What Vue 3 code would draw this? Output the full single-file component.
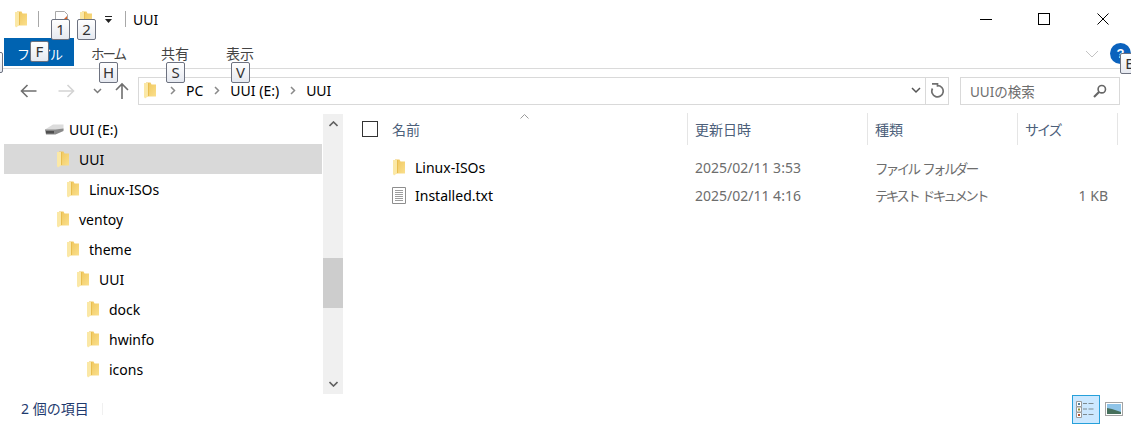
<script setup>
const tree = [
  { name: 'UUI', level: 1, selected: true },
  { name: 'Linux-ISOs', level: 2 },
  { name: 'ventoy', level: 1 },
  { name: 'theme', level: 2 },
  { name: 'UUI', level: 3 },
  { name: 'dock', level: 4 },
  { name: 'hwinfo', level: 4 },
  { name: 'icons', level: 4 },
  { name: 'tile-fonts', level: 2, noIcon: true },
]

const columns = [
  { label: '名前', width: 345, indent: 49 },
  { label: '更新日時', width: 180, indent: 7 },
  { label: '種類', width: 150, indent: 7 },
  { label: 'サイズ', width: 100, indent: 7, kana: true },
]

const files = [
  { name: 'Linux-ISOs', date: '2025/02/11 3:53', type: 'ファイル フォルダー', size: '', folder: true },
  { name: 'Installed.txt', date: '2025/02/11 4:16', type: 'テキスト ドキュメント', size: '1 KB', folder: false },
]

const crumbs = ['PC', 'UUI (E:)', 'UUI']
</script>

<template>
  <div class="win">
    <svg width="0" height="0" class="defs">
      <defs>
        <linearGradient id="fold" x1="0" y1="0" x2="1" y2="1">
          <stop offset="0" stop-color="#efc55a" />
          <stop offset="1" stop-color="#fadf8c" />
        </linearGradient>
        <symbol id="folder" viewBox="0 0 12 17">
          <path d="M2 0.5h4.500l1 2H12v12H2z" fill="url(#fold)" />
          <path d="M0 1h4.500v13L1 16.600 0 15z" fill="#fbe8a6" />
          <path d="M4.500 1v13" stroke="#e9be50" stroke-width="1" />
        </symbol>
      </defs>
    </svg>

    <header class="titlebar">
      <svg class="qa-folder" width="12" height="17"><use href="#folder" /></svg>
      <i class="sep sep-a"></i>
      <svg class="qa-doc" width="15" height="16" viewBox="0 0 15 16">
        <path d="M1.500.5h9l3 3v12h-12z" fill="#fff" stroke="#a8a8a8" />
        <path d="M10 8l3-3v4z" fill="#d9622b" />
      </svg>
      <svg class="qa-folder2" width="12" height="17"><use href="#folder" /></svg>
      <svg class="qa-drop" width="9" height="9" viewBox="0 0 9 9">
        <path d="M1 1.500h7" stroke="#222" />
        <path d="M1 4h7L4.500 8z" fill="#222" />
      </svg>
      <i class="sep sep-b"></i>
      <span class="title">UUI</span>
      <div class="controls">
        <button class="ctl">
          <svg width="12" height="12" viewBox="0 0 12 12"><path d="M0 6.500h12" stroke="#000" /></svg>
        </button>
        <button class="ctl">
          <svg width="12" height="12" viewBox="0 0 12 12"><rect x=".5" y=".5" width="11" height="11" fill="none" stroke="#000" /></svg>
        </button>
        <button class="ctl">
          <svg width="12" height="12" viewBox="0 0 12 12"><path d="M.5.500l11 11M11.500.5l-11 11" stroke="#000" /></svg>
        </button>
      </div>
    </header>

    <nav class="ribbon">
      <span class="tab file">ファイル</span>
      <span class="tab home">ホーム</span>
      <span class="tab share">共有</span>
      <span class="tab view">表示</span>
      <svg class="collapse" width="14" height="8" viewBox="0 0 14 8"><path d="M1 1l6 6 6-6" fill="none" stroke="#c4c4c4" /></svg>
      <svg class="help" width="21" height="21" viewBox="0 0 21 21">
        <circle cx="10.500" cy="10.500" r="10.500" fill="#0b62bd" />
        <text x="10.500" y="15" text-anchor="middle" fill="#fff" font-size="13" font-weight="700" font-family="Liberation Sans, sans-serif">?</text>
      </svg>
    </nav>

    <div class="addr-row">
      <svg class="nav-btn back" width="17" height="14" viewBox="0 0 17 14"><path d="M1.500 7h15M7.500 1l-6 6 6 6" fill="none" stroke="#6f6f6f" stroke-width="1.600" /></svg>
      <svg class="nav-btn fwd" width="17" height="14" viewBox="0 0 17 14"><path d="M15.500 7H.5M9.500 1l6 6-6 6" fill="none" stroke="#d4d4d4" stroke-width="1.600" /></svg>
      <svg class="nav-btn hist" width="9" height="6" viewBox="0 0 9 6"><path d="M1 1l3.500 3.500L8 1" fill="none" stroke="#7a7a7a" stroke-width="1.500" /></svg>
      <svg class="nav-btn up" width="14" height="17" viewBox="0 0 14 17"><path d="M7 17V2M1 8l6-6 6 6" fill="none" stroke="#6f6f6f" stroke-width="1.600" /></svg>
      <div class="addr">
        <svg class="addr-folder" width="12" height="17"><use href="#folder" /></svg>
        <template v-for="c in crumbs" :key="c">
          <svg class="crumb-sep" width="6" height="9" viewBox="0 0 6 9"><path d="M1 1l3.500 3.500L1 8" fill="none" stroke="#8a8a8a" stroke-width="1.500" /></svg>
          <span class="crumb">{{ c }}</span>
        </template>
        <svg class="addr-drop" width="10" height="7" viewBox="0 0 10 7"><path d="M1 1l4 4 4-4" fill="none" stroke="#555" stroke-width="1.500" /></svg>
        <span class="refresh">
          <svg width="15" height="15" viewBox="0 0 15 15"><path d="M7.500 2.500a5.700 5.700 0 1 1-5 3M2 .8h5.500v3" fill="none" stroke="#707070" stroke-width="1.700" /></svg>
        </span>
      </div>
      <div class="search">
        <span>UUIの検索</span>
        <svg width="14" height="14" viewBox="0 0 14 14"><circle cx="8.800" cy="5.200" r="3.700" fill="none" stroke="#666" stroke-width="1.600" /><path d="M6 8L1 13" stroke="#666" stroke-width="2.200" /></svg>
      </div>
    </div>

    <main class="body">
      <aside class="tree">
        <ul class="tree-list">
          <li class="node drive">
            <svg width="19" height="11" viewBox="0 0 19 11">
              <path d="M0 5.500L8 .5h10.500V6L10 9.500H1z" fill="#dcdcdc" />
              <path d="M0 5.500h10.500l8-1V7l-8 3.500H1z" fill="#8a8a8a" />
              <path d="M1 7h8v2.500H1z" fill="#4f4f4f" />
            </svg>
            <span>UUI (E:)</span>
          </li>
          <li
            v-for="(n, i) in tree"
            :key="i"
            class="node"
            :class="{ selected: n.selected }"
            :style="{ paddingLeft: 43 + n.level * 10 + 'px' }"
          >
            <svg v-if="!n.noIcon" width="12" height="17"><use href="#folder" /></svg>
            <i v-else class="no-icon"></i>
            <span>{{ n.name }}</span>
          </li>
        </ul>
        <div class="scroll">
          <svg width="9" height="6" viewBox="0 0 9 6"><path d="M.5 5l4-4 4 4" fill="none" stroke="#606060" stroke-width="1.600" /></svg>
          <div class="track"><div class="thumb"></div></div>
          <svg width="9" height="6" viewBox="0 0 9 6"><path d="M.5 1l4 4 4-4" fill="none" stroke="#606060" stroke-width="1.600" /></svg>
        </div>
      </aside>

      <section class="list">
        <div class="heads">
          <div
            v-for="col in columns"
            :key="col.label"
            class="head"
            :class="{ kana: col.kana }"
            :style="{ width: col.width + 'px', paddingLeft: col.indent + 'px' }"
          >{{ col.label }}</div>
          <span class="check"></span>
          <svg class="sort" width="9" height="5" viewBox="0 0 9 5"><path d="M.5 4.500l4-4 4 4" fill="none" stroke="#9a9a9a" /></svg>
        </div>
        <div class="rows">
          <div v-for="f in files" :key="f.name" class="row">
            <div class="cell name">
              <svg v-if="f.folder" class="row-folder" width="12" height="17"><use href="#folder" /></svg>
              <svg v-else width="14" height="17" viewBox="0 0 14 17">
                <path d="M.5.500h13v16H.5z" fill="#fff" stroke="#8e8e8e" />
                <path d="M3 3.500h8M3 5.500h8M3 7.500h8M3 9.500h8M3 11.500h8M3 13.500h8" stroke="#9d9d9d" />
              </svg>
              <span>{{ f.name }}</span>
            </div>
            <div class="cell date">{{ f.date }}</div>
            <div class="cell type">{{ f.type }}</div>
            <div class="cell size">{{ f.size }}</div>
          </div>
        </div>
      </section>
    </main>

    <footer class="status">
      <span class="count">2 個の項目</span>
      <i class="status-sep"></i>
      <div class="views">
        <span class="view-btn on">
          <svg width="20" height="17" viewBox="0 0 20 17">
            <path d="M.5.500h5v5h-5zM.5 6h5v5h-5zM.5 11.500h5v5h-5z" fill="#fff" stroke="#9a9a9a" />
            <rect x="2" y="2" width="2" height="2" fill="#4f7f9a" />
            <rect x="2" y="7.500" width="2" height="2" fill="#8c8a2a" />
            <rect x="2" y="13" width="2" height="2" fill="#b5502a" />
            <path d="M7 2.500h4M12.500 2.500h5M7 8h4M12.500 8h5M7 13.500h4M12.500 13.500h5" stroke="#7d8a90" />
          </svg>
        </span>
        <svg class="view-large" width="18" height="14" viewBox="0 0 18 14">
          <rect x=".5" y=".5" width="17" height="13" fill="#fff" stroke="#a4a4a4" />
          <rect x="2" y="2" width="14" height="10" fill="#8fc4e8" />
          <path d="M2 6l5 1 9 3v2H2z" fill="#47705c" />
        </svg>
      </div>
    </footer>

    <span class="tip tip-edge"></span>
    <span class="tip tip-1">1</span>
    <span class="tip tip-2">2</span>
    <span class="tip tip-f">F</span>
    <span class="tip tip-h">H</span>
    <span class="tip tip-s">S</span>
    <span class="tip tip-v">V</span>
    <span class="tip tip-e">E</span>
  </div>
</template>

<style>
html,
body {
  margin: 0;
  background: #fff;
}
</style>

<style scoped>
.win {
  position: relative;
  width: 1131px;
  height: 424px;
  overflow: hidden;
  background: #fff;
  font-family: "Noto Sans", "Noto Sans CJK JP", sans-serif;
  font-size: 14px;
  color: #000;
}
.defs {
  position: absolute;
}
.sep {
  width: 1px;
  height: 16px;
  background: #a8a8a8;
}

/* title bar */
.titlebar {
  height: 38px;
  display: flex;
  align-items: center;
  padding-left: 15px;
}
.qa-folder {
  margin-right: 11px;
}
.qa-doc {
  margin-left: 15px;
  margin-right: 11px;
}
.qa-drop {
  margin-left: 12px;
}
.sep-b {
  margin-left: 12px;
}
.title {
  margin-left: 7px;
  font-size: 14px;
}
.controls {
  margin-left: auto;
  display: flex;
  margin-right: -1px;
}
.ctl {
  width: 58.500px;
  height: 38px;
  padding: 0;
  border: 0;
  background: none;
  display: flex;
  align-items: center;
  justify-content: center;
}

/* ribbon */
.ribbon {
  height: 31px;
  box-sizing: border-box;
  display: flex;
  align-items: flex-start;
  padding-left: 4px;
  border-bottom: 1px solid #dadada;
}
.tab {
  height: 28px;
  line-height: 32px;
  color: #444;
}
.file {
  width: 70px;
  background: #0063b1;
  color: #fff;
  text-align: center;
  font-size: 13px;
  letter-spacing: -2px;
}
.home {
  margin-left: 17px;
  font-size: 13.500px;
  letter-spacing: -2px;
}
.share {
  margin-left: 36px;
}
.view {
  margin-left: 37px;
}
.collapse {
  margin-left: auto;
  margin-top: 12px;
}
.help {
  margin: 5px 0 0 11px;
  flex: none;
}

/* address row */
.addr-row {
  height: 35px;
  display: flex;
  align-items: center;
  padding: 0 11px 0 20px;
}
.nav-btn {
  flex: none;
  margin-top: 8px;
}
.fwd {
  margin-left: 21px;
}
.hist {
  margin-left: 18px;
}
.up {
  margin-left: 13px;
  margin-right: 9px;
  margin-top: 7px;
}
.addr,
.search {
  height: 28px;
  box-sizing: border-box;
  border: 1px solid #d9d9d9;
  display: flex;
  align-items: center;
  margin-top: 8px;
}
.addr {
  width: 811px;
  padding-left: 5px;
  flex: none;
}
.addr-folder {
  margin-right: 14px;
}
.crumb-sep {
  flex: none;
}
.crumb {
  margin-left: 10px;
  margin-right: 11px;
  white-space: nowrap;
}
.addr-drop {
  margin-left: auto;
  margin-right: 4px;
}
.refresh {
  width: 22px;
  height: 26px;
  border-left: 1px solid #d9d9d9;
  display: flex;
  align-items: center;
  justify-content: center;
}
.search {
  width: 161px;
  margin-left: 11px;
  padding: 0 12px 0 9px;
  justify-content: space-between;
  color: #6d6d6d;
  font-size: 13.500px;
}

/* body */
.body {
  height: 290px;
  display: flex;
}
.tree {
  width: 343px;
  flex: none;
  display: flex;
  padding: 10px 0 0 4px;
  box-sizing: border-box;
  overflow: hidden;
}
.tree-list {
  width: 318px;
  margin: 0;
  padding: 0;
  list-style: none;
}
.node {
  height: 30px;
  display: flex;
  align-items: center;
  gap: 10px;
  box-sizing: border-box;
}
.selected {
  background: #d9d9d9;
}
.drive {
  padding-left: 41px;
  gap: 5px;
}
.no-icon {
  width: 12px;
}
.scroll {
  width: 20px;
  margin-left: 1px;
  height: 280px;
  background: #f0f0f0;
  display: flex;
  flex-direction: column;
  align-items: center;
  padding: 7px 0;
  box-sizing: border-box;
}
.track {
  flex: 1;
  align-self: stretch;
}
.thumb {
  height: 50px;
  margin: 131px 0 0;
  background: #cdcdcd;
}

/* list */
.list {
  flex: 1;
  min-width: 0;
}
.heads {
  position: relative;
  display: flex;
  padding-top: 9px;
  height: 41px;
  box-sizing: border-box;
}
.head {
  height: 32px;
  line-height: 33px;
  box-sizing: border-box;
  border-right: 1px solid #e5e5e5;
  color: #4c607a;
}
.kana {
  letter-spacing: -2px;
}
.check {
  position: absolute;
  left: 19px;
  top: 17px;
  width: 16px;
  height: 16px;
  box-sizing: border-box;
  border: 1px solid #333;
}
.sort {
  position: absolute;
  left: 177px;
  top: 10px;
}
.rows {
  padding-top: 9px;
}
.row {
  display: flex;
  height: 27.500px;
  align-items: center;
}
.cell {
  box-sizing: border-box;
  color: #6d6d6d;
  white-space: nowrap;
}
.name {
  width: 345px;
  padding-left: 49px;
  display: flex;
  align-items: center;
  gap: 9px;
  color: #000;
}
.row-folder {
  margin-left: 1px;
  margin-right: 1px;
}
.date {
  width: 180px;
  padding-left: 7px;
}
.type {
  width: 150px;
  padding-left: 7px;
  font-size: 13.500px;
  letter-spacing: -2.650px;
  word-spacing: 3px;
}
.size {
  width: 90px;
  text-align: right;
}

/* status */
.status {
  height: 30px;
  display: flex;
  align-items: center;
  padding-left: 21px;
}
.count {
  color: #1e3a6e;
  margin-bottom: 3px;
}
.status-sep {
  width: 1px;
  height: 12px;
  margin-left: 13px;
  background: #f0f0f0;
}
.views {
  margin-left: auto;
  display: flex;
  align-items: center;
  gap: 5px;
  margin-right: 8px;
}
.view-btn {
  width: 28px;
  height: 29px;
  box-sizing: border-box;
  display: flex;
  align-items: center;
  justify-content: center;
}
.on {
  background: #cce8ff;
  border: 1px solid #26a0da;
}

/* keytips */
.tip {
  position: absolute;
  width: 19px;
  height: 21px;
  box-sizing: border-box;
  border: 1px solid #6d7280;
  border-radius: 2px;
  background: linear-gradient(#fff, #e6e9f0);
  color: #333;
  font-size: 15px;
  line-height: 19px;
  text-align: center;
}
.tip-edge { left: -16px; top: 52px; }
.tip-1 { left: 51px; top: 19px; }
.tip-2 { left: 77px; top: 19px; }
.tip-f { left: 30px; top: 41px; }
.tip-h { left: 99px; top: 62px; }
.tip-s { left: 166px; top: 62px; }
.tip-v { left: 231px; top: 62px; }
.tip-e { left: 1120px; top: 53px; }
</style>
